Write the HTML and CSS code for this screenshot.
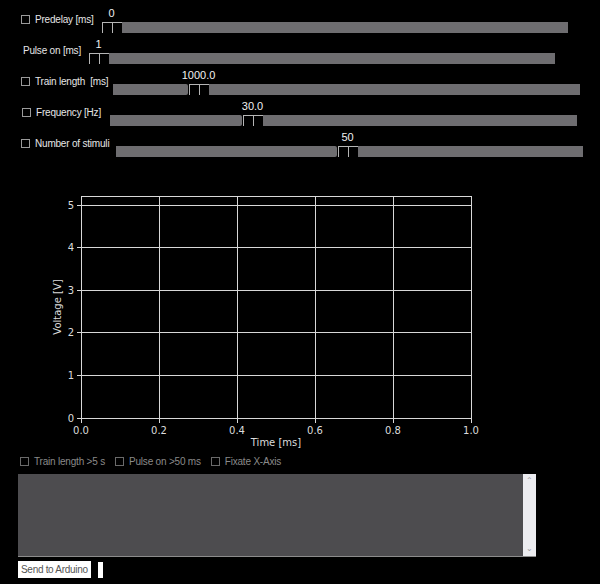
FILE: index.html
```html
<!DOCTYPE html>
<html lang="en">
<head>
	<title>Stimulator</title>
	<link rel="stylesheet" href="styles.css">
</head>
<body>
<div class="sliders">
	<div class="row">
		<label class="lbl lbl-predelay"><span class="box"></span>Predelay [ms]</label>
		<div class="slider">
			<div class="knob"><span class="val">0</span></div>
			<div class="seg rest"></div>
		</div>
	</div>
	<div class="row">
		<label class="lbl lbl-pulse">Pulse on [ms]</label>
		<div class="slider">
			<div class="knob"><span class="val">1</span></div>
			<div class="seg rest"></div>
		</div>
	</div>
	<div class="row">
		<label class="lbl lbl-train"><span class="box"></span>Train length &nbsp;[ms]</label>
		<div class="slider">
			<div class="seg first" style="width: 75px"></div>
			<div class="knob"><span class="val">1000.0</span></div>
			<div class="seg rest"></div>
		</div>
	</div>
	<div class="row">
		<label class="lbl lbl-freq"><span class="box"></span>Frequency [Hz]</label>
		<div class="slider">
			<div class="seg first" style="width: 132px"></div>
			<div class="knob"><span class="val">30.0</span></div>
			<div class="seg rest"></div>
		</div>
	</div>
	<div class="row">
		<label class="lbl lbl-stim"><span class="box"></span>Number of stimuli</label>
		<div class="slider">
			<div class="seg first" style="width: 221px"></div>
			<div class="knob"><span class="val">50</span></div>
			<div class="seg rest"></div>
		</div>
	</div>
</div>

<svg class="plot" width="450" height="270" viewBox="0 0 450 270">
	<g stroke="#d8d8d8" stroke-width="1" fill="none" shape-rendering="crispEdges">
		<!-- grid -->
		<line x1="41" y1="20.5" x2="431" y2="20.5"/>
		<line x1="41" y1="62.5" x2="431" y2="62.5"/>
		<line x1="41" y1="105.5" x2="431" y2="105.5"/>
		<line x1="41" y1="147.5" x2="431" y2="147.5"/>
		<line x1="41" y1="190.5" x2="431" y2="190.5"/>
		<line x1="119.5" y1="11" x2="119.5" y2="233"/>
		<line x1="197.5" y1="11" x2="197.5" y2="233"/>
		<line x1="275.5" y1="11" x2="275.5" y2="233"/>
		<line x1="353.5" y1="11" x2="353.5" y2="233"/>
		<!-- frame -->
		<rect x="41.5" y="11.5" width="390" height="222"/>
		<!-- ticks -->
		<line x1="37" y1="20.5" x2="41" y2="20.5"/>
		<line x1="37" y1="62.5" x2="41" y2="62.5"/>
		<line x1="37" y1="105.5" x2="41" y2="105.5"/>
		<line x1="37" y1="147.5" x2="41" y2="147.5"/>
		<line x1="37" y1="190.5" x2="41" y2="190.5"/>
		<line x1="37" y1="233.5" x2="41" y2="233.5"/>
		<line x1="41.5" y1="234" x2="41.5" y2="238"/>
		<line x1="119.5" y1="234" x2="119.5" y2="238"/>
		<line x1="197.5" y1="234" x2="197.5" y2="238"/>
		<line x1="275.5" y1="234" x2="275.5" y2="238"/>
		<line x1="353.5" y1="234" x2="353.5" y2="238"/>
		<line x1="431.5" y1="234" x2="431.5" y2="238"/>
	</g>
	<g class="ticklbl" text-anchor="end">
		<text x="34" y="24">5</text>
		<text x="34" y="66">4</text>
		<text x="34" y="109">3</text>
		<text x="34" y="151">2</text>
		<text x="34" y="194">1</text>
		<text x="34" y="237">0</text>
	</g>
	<g class="ticklbl" text-anchor="middle">
		<text x="41" y="249">0.0</text>
		<text x="119" y="249">0.2</text>
		<text x="197" y="249">0.4</text>
		<text x="275" y="249">0.6</text>
		<text x="353" y="249">0.8</text>
		<text x="431" y="249">1.0</text>
		<text x="236" y="261">Time [ms]</text>
		<text x="0" y="0" transform="translate(21 122) rotate(-90)">Voltage [V]</text>
	</g>
</svg>

<div class="options">
	<label class="opt"><span class="box"></span>Train length &gt;5 s</label>
	<label class="opt"><span class="box"></span>Pulse on &gt;50 ms</label>
	<label class="opt"><span class="box"></span>Fixate X-Axis</label>
</div>

<div class="console">
	<div class="log"></div>
	<div class="scroll">
		<span class="arrow">&#8963;</span>
		<span class="arrow down">&#8964;</span>
	</div>
</div>

<div class="sendbar">
	<div class="send">Send to Arduino</div>
	<div class="cmd"></div>
</div>
</body>
</html>
```

FILE: styles.css
```css
body {
    margin: 0;
    background: #000000;
    font-family: 'Liberation Sans', Arial, sans-serif;
    color: #e6e6e6;
    height: 584px;
    overflow: hidden;
}

.sliders {
    padding-top: 7px;
}

.row {
    display: flex;
    align-items: flex-start;
    height: 31px;
    padding-left: 21px;
}

.lbl {
    display: flex;
    align-items: center;
    height: 14px;
    margin-top: 5px;
    font-size: 10px;
    letter-spacing: -0.2px;
    white-space: nowrap;
}

.lbl-predelay { width: 80px; }
.lbl-pulse { width: 65px; padding-left: 2px; }
.lbl-train { width: 92px; }
.lbl-freq { width: 88px; padding-left: 1px; }
.lbl-stim { width: 95px; }

.box {
    display: inline-block;
    width: 7px;
    height: 7px;
    border: 1px solid #9a9a9a;
    margin-right: 5px;
    flex-shrink: 0;
}

.slider {
    display: flex;
    align-items: flex-end;
    width: 467px;
    height: 26px;
}

.seg {
    height: 11px;
    background: #6e6d70;
}

.seg.first {
    border-radius: 0 2px 2px 0;
}

.seg.rest {
    flex: 1;
}

.knob {
    width: 21px;
    height: 26px;
    display: flex;
    flex-direction: column;
    align-items: center;
    flex-shrink: 0;
}

.val {
    height: 15px;
    line-height: 13px;
    font-size: 11px;
    color: #f0f0f0;
    white-space: nowrap;
}

.knob::after {
    content: "";
    display: block;
    width: 19px;
    height: 10px;
    border-top: 1px solid #b5b5b5;
    border-left: 1px solid #b5b5b5;
    background: linear-gradient(to right, transparent 9px, #b5b5b5 9px, #b5b5b5 10px, transparent 10px);
}

.plot {
    display: block;
    margin: 23px 0 0 40px;
}

.ticklbl {
    font-family: 'DejaVu Sans', sans-serif;
    font-size: 10px;
    fill: #dcdcdc;
}

.options {
    display: flex;
    gap: 10px;
    padding-left: 20px;
    height: 13px;
    align-items: center;
}

.opt {
    display: flex;
    align-items: center;
    font-size: 10px;
    letter-spacing: -0.2px;
    color: #8a8a8a;
}

.opt .box {
    border-color: #6a6a6a;
}

.console {
    display: flex;
    margin: 6px 0 0 18px;
    width: 518px;
    height: 83px;
    border-bottom: 1px solid #8c8c8c;
    box-sizing: border-box;
}

.log {
    flex: 1;
    background: #4d4c4f;
}

.scroll {
    width: 13px;
    background: #ececf0;
    display: flex;
    flex-direction: column;
    justify-content: space-between;
    align-items: center;
    font-size: 8px;
    color: #9a9a9e;
    line-height: 8px;
    padding: 3px 0;
    box-sizing: border-box;
}

.sendbar {
    display: flex;
    gap: 7px;
    margin: 4px 0 0 18px;
    height: 17px;
}

.send {
    background: #ffffff;
    color: #555555;
    font-size: 10px;
    letter-spacing: -0.3px;
    line-height: 17px;
    padding: 0 3px;
    white-space: nowrap;
}

.cmd {
    width: 5px;
    margin-top: 1px;
    background: #ffffff;
}
```
